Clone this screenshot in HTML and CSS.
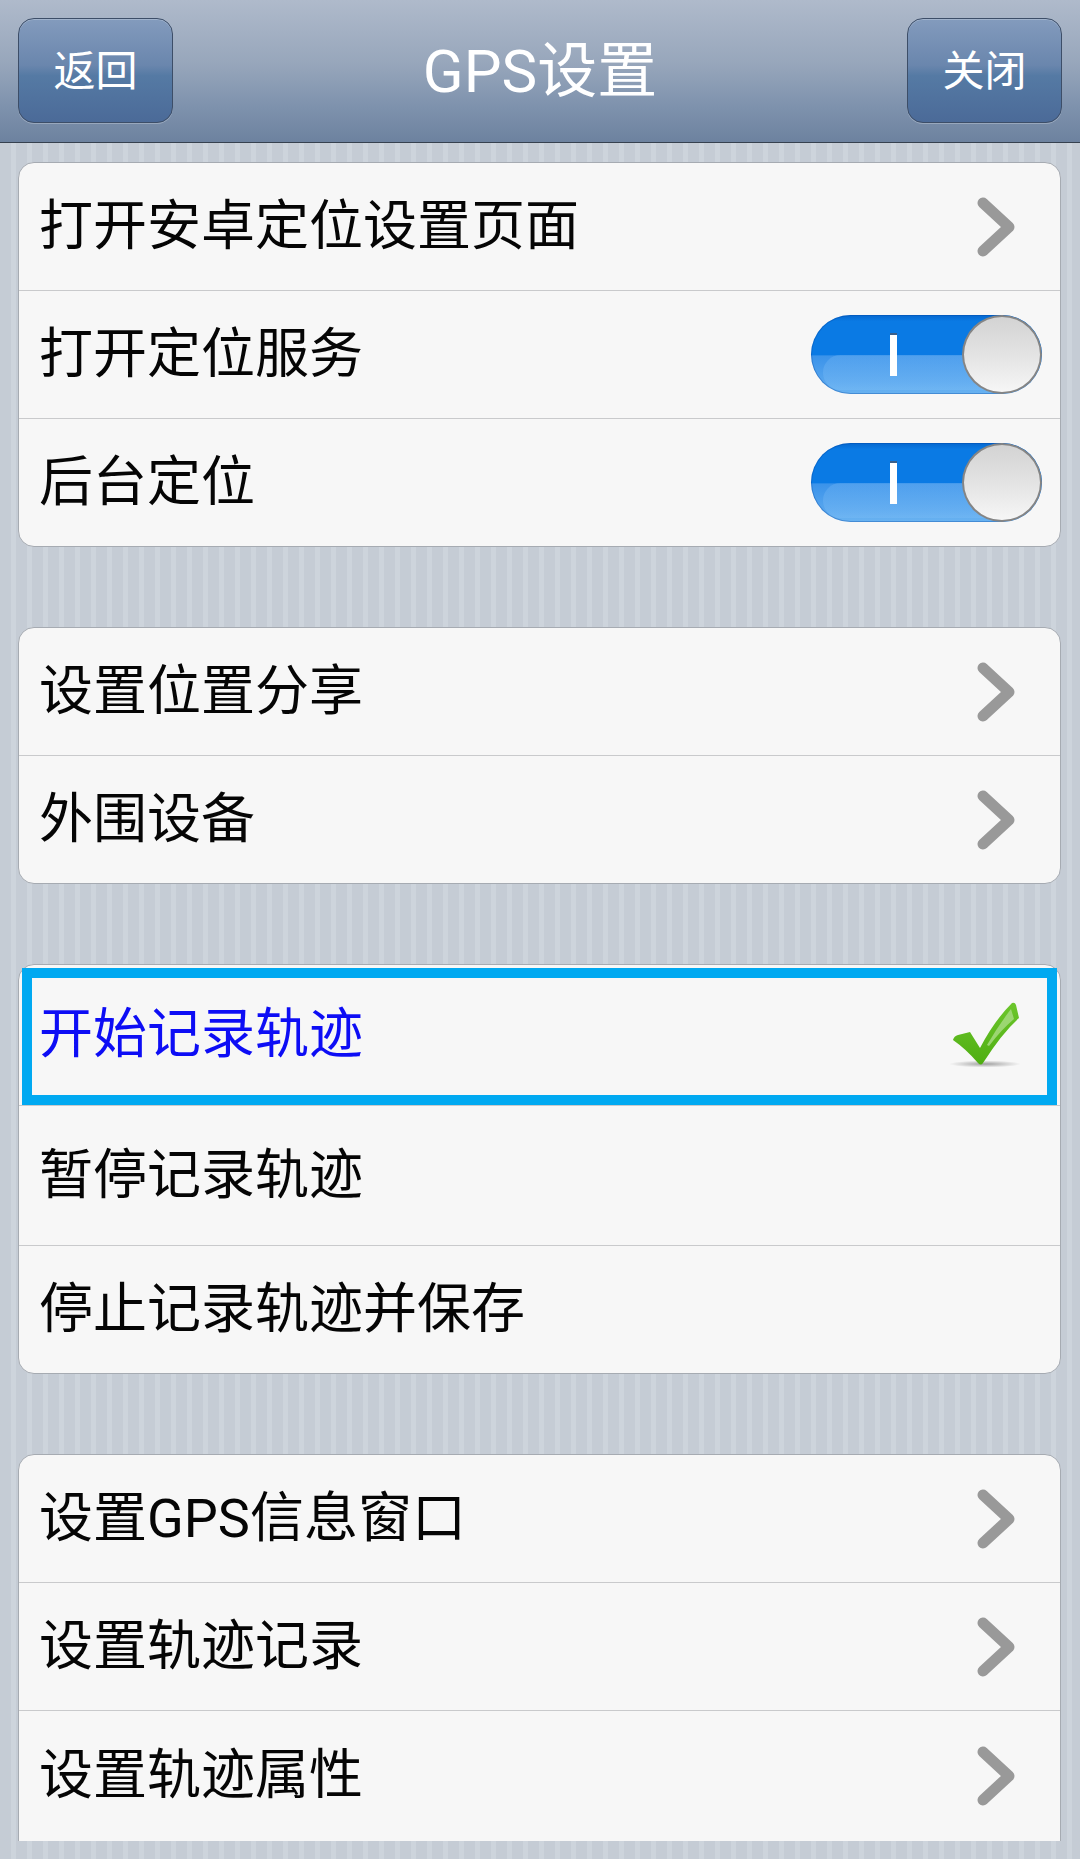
FILE: index.html
```html
<!DOCTYPE html>
<html lang="zh-CN">
<head>
<meta charset="utf-8">
<title>GPS设置</title>
<link rel="stylesheet" href="styles.css">
</head>
<body>
<div class="screen">
  <header class="topbar">
    <div class="nav-btn">返回</div>
    <div class="title">GPS设置</div>
    <div class="nav-btn">关闭</div>
  </header>
  <main class="content">
    <section class="card">
      <div class="row"><span class="label">打开安卓定位设置页面</span>
        <svg class="chev" viewBox="0 0 40 62"><polyline points="7,7 33,31 7,55"/></svg></div>
      <div class="row"><span class="label">打开定位服务</span>
        <div class="toggle"><span class="bar"></span><span class="knob"></span></div></div>
      <div class="row"><span class="label">后台定位</span>
        <div class="toggle"><span class="bar"></span><span class="knob"></span></div></div>
    </section>

    <section class="card">
      <div class="row"><span class="label">设置位置分享</span>
        <svg class="chev" viewBox="0 0 40 62"><polyline points="7,7 33,31 7,55"/></svg></div>
      <div class="row"><span class="label">外围设备</span>
        <svg class="chev" viewBox="0 0 40 62"><polyline points="7,7 33,31 7,55"/></svg></div>
    </section>

    <section class="card">
      <div class="row row-active">
        <div class="focus-box"><span class="label label-blue">开始记录轨迹</span>
          <svg class="check" viewBox="0 0 80 72">
            <defs>
              <radialGradient id="sh" cx="0.5" cy="0.5" r="0.5">
                <stop offset="0" stop-color="#000" stop-opacity="0.35"/>
                <stop offset="1" stop-color="#000" stop-opacity="0"/>
              </radialGradient>
              <linearGradient id="gr" x1="0" y1="0" x2="0" y2="1">
                <stop offset="0" stop-color="#6cc62c"/>
                <stop offset="1" stop-color="#4fae12"/>
              </linearGradient>
            </defs>
            <ellipse cx="38" cy="65" rx="36" ry="3.5" fill="url(#sh)"/>
            <path d="M6 41 Q7 37 11 36 L23 33 L33 49 Q47 22 65 4 Q68 3 69 6 L72 19 Q55 34 36 64 Q34 67 31 64 Q19 50 6 41 Z" fill="url(#gr)"/>
            <path d="M40 46 Q51 27 64 10 L67 20 Q54 31 42 47 Z" fill="#a6da80" opacity="0.85"/>
          </svg>
        </div>
      </div>
      <div class="row row-tall"><span class="label">暂停记录轨迹</span></div>
      <div class="row"><span class="label">停止记录轨迹并保存</span></div>
    </section>

    <section class="card card-clipped">
      <div class="row"><span class="label">设置GPS信息窗口</span>
        <svg class="chev" viewBox="0 0 40 62"><polyline points="7,7 33,31 7,55"/></svg></div>
      <div class="row"><span class="label">设置轨迹记录</span>
        <svg class="chev" viewBox="0 0 40 62"><polyline points="7,7 33,31 7,55"/></svg></div>
      <div class="row row-last"><span class="label">设置轨迹属性</span>
        <svg class="chev" viewBox="0 0 40 62"><polyline points="7,7 33,31 7,55"/></svg></div>
    </section>
  </main>
</div>
</body>
</html>
```

FILE: styles.css
```css
* { box-sizing: border-box; }

html, body {
  margin: 0;
  padding: 0;
}

body {
  width: 1080px;
  height: 1859px;
  overflow: hidden;
  font-family: Roboto, "Noto Sans CJK SC", sans-serif;
  background: repeating-linear-gradient(90deg, #c5ccd5 0px, #c5ccd5 11px, #cdd4dc 11px, #cdd4dc 16px);
}

.screen {
  display: flex;
  flex-direction: column;
  height: 1859px;
}

.topbar {
  height: 143px;
  flex: none;
  display: flex;
  align-items: center;
  justify-content: space-between;
  padding: 0 18px 0 18px;
  background: linear-gradient(180deg, #afbacb 0%, #97a6bb 45%, #7e92ad 75%, #6d829f 100%);
  border-bottom: 1px solid #36414f;
}

.nav-btn {
  width: 155px;
  height: 105px;
  border-radius: 16px;
  border: 1.5px solid #3d4e68;
  background: linear-gradient(180deg, #839bbd 0%, #6a86ad 45%, #557aa4 55%, #4b6a98 100%);
  box-shadow: inset 0 1px 0 rgba(255,255,255,0.25), 0 1px 0 rgba(255,255,255,0.25);
  color: #fff;
  font-size: 42px;
  display: flex;
  align-items: center;
  justify-content: center;
  line-height: 1;
  padding-top: 4px;
  margin-bottom: 2px;
}

.title {
  color: #fff;
  font-size: 60px;
  line-height: 1;
  padding-top: 2px;
}

.content {
  height: 1698px;
  overflow: hidden;
  padding: 19px 19px 0 18px;
  display: flex;
  flex-direction: column;
  gap: 80px;
  flex: none;
}

.card {
  flex: none;
  background: #f7f7f7;
  border: 1px solid #a6abb2;
  border-radius: 16px;
  display: flex;
  flex-direction: column;
}

.row {
  height: 128px;
  display: flex;
  align-items: center;
  justify-content: space-between;
  padding: 0 18px 0 20px;
  border-top: 1px solid #c9cacc;
}

.row:first-child {
  border-top: none;
  height: 127px;
}

.label {
  font-size: 54px;
  line-height: 1;
  color: #050505;
  white-space: nowrap;
}

.label-blue {
  color: #0d0df5;
}

.chev {
  width: 40px;
  height: 62px;
  margin-right: 26px;
  fill: none;
  stroke: #999999;
  stroke-width: 11;
  stroke-linecap: round;
  stroke-linejoin: round;
}

.toggle {
  position: relative;
  width: 231px;
  height: 79px;
  border-radius: 40px;
  background: linear-gradient(180deg, #0567cf 0%, #0a7ae4 8%, #0a7ae4 50%, #3b93ea 52%, #58a6ee 85%, #6ab3f1 100%);
  box-shadow: inset 0 0 0 1px rgba(0, 70, 160, 0.35);
  display: flex;
  align-items: center;
  overflow: hidden;
}

.toggle::before {
  content: "";
  position: absolute;
  left: 12px;
  right: 30px;
  top: 40px;
  bottom: 4px;
  border-radius: 30px 0 0 30px;
  background: linear-gradient(180deg, rgba(120, 185, 245, 0.35), rgba(140, 200, 250, 0.25));
}

.bar {
  position: relative;
  width: 7px;
  height: 43px;
  background: #ffffff;
  margin-left: 79px;
  border-top: 2px solid #3a5f8a;
}

.knob {
  position: relative;
  margin-left: auto;
  width: 80px;
  height: 79px;
  border-radius: 50%;
  border: 2px solid #858585;
  background: linear-gradient(180deg, #d3d3d3 0%, #e3e3e3 50%, #f6f6f6 100%);
}

.row.row-active {
  height: 140px;
  padding: 3px 3px 0 3px;
  border-top: none;
  align-items: stretch;
}

.focus-box {
  flex: 1;
  border: 10px solid #00a9f1;
  display: flex;
  align-items: center;
  justify-content: space-between;
  padding: 0 20px 4px 7px;
}

.check {
  width: 80px;
  height: 72px;
}

.row.row-tall {
  height: 140px;
}

.row.row-last {
  height: 129px;
  padding-bottom: 12px;
  box-sizing: content-box;
  padding-top: 0;
}

.card-clipped {
  border-bottom-left-radius: 0;
  border-bottom-right-radius: 0;
}
```
